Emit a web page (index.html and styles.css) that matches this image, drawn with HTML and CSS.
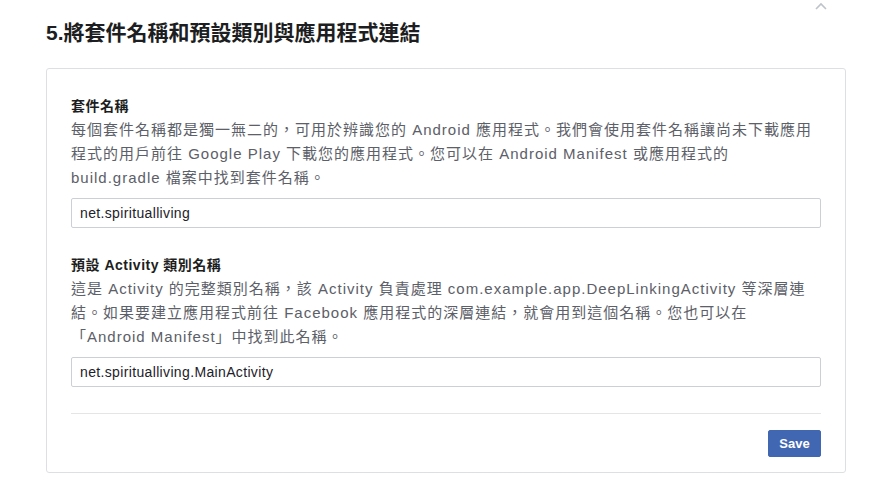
FILE: index.html
```html
<!DOCTYPE html>
<html lang="zh-Hant">
<head>
<meta charset="utf-8">
<title>將套件名稱和預設類別與應用程式連結</title>
<link rel="stylesheet" href="styles.css">
</head>
<body>
<section class="section">
  <div class="toggle-row">
    <svg class="chevron" width="12" height="8" viewBox="0 0 12 8" aria-hidden="true">
      <path d="M1 7 L6 2 L11 7" fill="none" stroke="#bec3c9" stroke-width="1.6"/>
    </svg>
  </div>
  <h2 class="title">5.將套件名稱和預設類別與應用程式連結</h2>
  <div class="card">
    <div class="field">
      <div class="label">套件名稱</div>
      <p class="desc">每個套件名稱都是獨一無二的，可用於辨識您的 Android 應用程式。我們會使用套件名稱讓尚未下載應用<br>程式的用戶前往 Google Play 下載您的應用程式。您可以在 Android Manifest 或應用程式的<br>build.gradle 檔案中找到套件名稱。</p>
      <div class="input">net.spiritualliving</div>
    </div>
    <div class="field">
      <div class="label">預設 <b>Activity</b> 類別名稱</div>
      <p class="desc">這是 Activity 的完整類別名稱，該 Activity 負責處理 com.example.app.DeepLinkingActivity 等深層連<br>結。如果要建立應用程式前往 Facebook 應用程式的深層連結，就會用到這個名稱。您也可以在<br>「Android Manifest」中找到此名稱。</p>
      <div class="input">net.spiritualliving.MainActivity</div>
    </div>
    <div class="footer">
      <button class="save">Save</button>
    </div>
  </div>
</section>
</body>
</html>
```
FILE: styles.css
```css
html, body {
  margin: 0;
  padding: 0;
  background: #ffffff;
}
body {
  font-family: "Liberation Sans", "Noto Sans CJK TC", sans-serif;
  color: #1c1e21;
}
.section {
  width: 800px;
  padding-left: 46px;
}
.toggle-row {
  display: flex;
  justify-content: flex-end;
  padding-right: 19px;
  padding-top: 2px;
  height: 10px;
}
.chevron {
  display: block;
}
.title {
  margin: 9px 0 23px 0;
  font-size: 21px;
  line-height: 24px;
  font-weight: 600;
  color: #1c1e21;
}
.card {
  box-sizing: border-box;
  width: 800px;
  border: 1px solid #dddfe2;
  border-radius: 3px;
  padding: 25px 24px 15px 24px;
}
.field + .field {
  margin-top: 25px;
}
.label {
  font-size: 14px;
  line-height: 24px;
  font-weight: bold;
  letter-spacing: 0.5px;
  color: #1c1e21;
}
.label b {
  font-weight: bold;
}
.desc {
  margin: 0;
  font-size: 15px;
  line-height: 24px;
  letter-spacing: 1px;
  color: #5c6068;
}
.input {
  box-sizing: border-box;
  margin-top: 8px;
  height: 30px;
  border: 1px solid #ccd0d5;
  border-radius: 2px;
  padding: 0 8px;
  font-size: 14px;
  line-height: 28px;
  letter-spacing: 0.35px;
  color: #1d2129;
}
.footer {
  margin-top: 26px;
  border-top: 1px solid #e5e5e5;
  padding-top: 16px;
  display: flex;
  justify-content: flex-end;
}
.save {
  width: 53px;
  height: 27px;
  background: #4267b2;
  border: 1px solid #4267b2;
  border-radius: 2px;
  color: #ffffff;
  font-family: "Liberation Sans", sans-serif;
  font-weight: bold;
  font-size: 13px;
  padding: 0;
}
```
